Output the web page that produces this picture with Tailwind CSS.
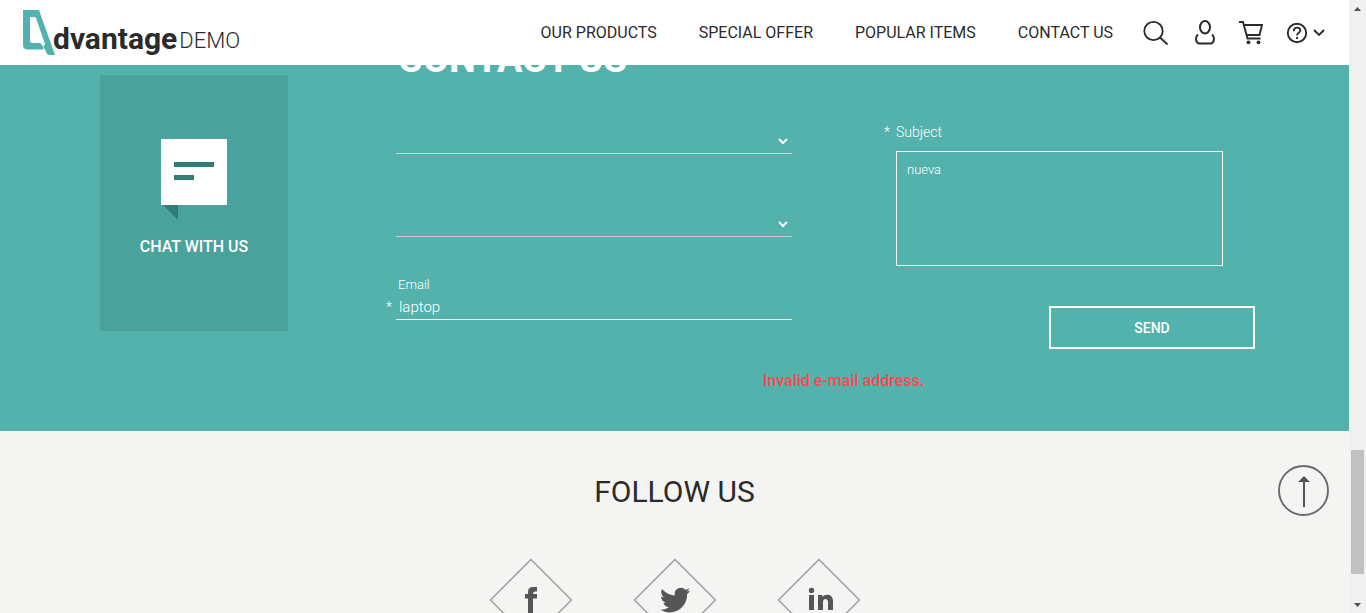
<!DOCTYPE html>
<html lang="en">
<head>
<meta charset="utf-8">
<meta name="viewport" content="width=device-width, initial-scale=1">
<title>Advantage Demo</title>
<script src="https://cdn.jsdelivr.net/npm/@tailwindcss/browser@4"></script>
</head>
<body class="flex h-screen overflow-hidden bg-[#f4f4f2] font-['Roboto',sans-serif] text-[#2b2b2b]">
<div class="flex min-w-0 flex-1 flex-col">
  <header class="relative z-10 flex h-[65px] shrink-0 items-center justify-between bg-white pr-[23px] pl-[23px]">
    <a href="#" class="flex items-end" aria-label="Advantage Demo">
      <svg class="h-[45px] w-8" viewBox="0 0 32 45" fill="#54b2ad"><path fill-rule="evenodd" d="M0 0H16L32 45H27Q24 45 23 42L20 35.500L20.500 39.500H5Q0 39.500 0 35ZM7 7V30.500Q7 33 10 33H16Q18 33 19 35L20 37L22 34L13 8Q12.500 7 11 7Z"/></svg>
      <span class="-ml-0.5 text-[30px] leading-8 font-bold">dvantage</span>
      <span class="ml-0.5 text-[22px] leading-7 font-light">DEMO</span>
    </a>
    <div class="flex items-center">
      <nav class="flex gap-[42px] pt-px text-base">
        <a href="#">OUR PRODUCTS</a>
        <a href="#">SPECIAL OFFER</a>
        <a href="#">POPULAR ITEMS</a>
        <a href="#">CONTACT US</a>
      </nav>
      <button class="ml-[30px]" aria-label="Search"><svg class="size-[26px]" viewBox="0 0 26 26" fill="none" stroke="#2b2b2b" stroke-width="1.800"><circle cx="10.500" cy="11" r="9.200"/><path d="M17 17.500L24.500 24.500"/></svg></button>
      <button class="ml-[26px]" aria-label="Account"><svg class="h-[26px] w-5" viewBox="0 0 20 26" fill="none" stroke="#2b2b2b" stroke-width="2"><ellipse cx="10" cy="7.200" rx="5" ry="6.200"/><path d="M3 14.500C0 17 .5 23.500 4.500 23.500H15.500C19.500 23.500 20 17 17 14.500"/></svg></button>
      <button class="ml-6" aria-label="Cart"><svg class="h-[26px] w-[25px]" viewBox="0 0 25 26" fill="none" stroke="#2b2b2b" stroke-width="1.900"><path d="M0 2H4L8.500 18.500H21.500M5 5H23L20.500 15H7.500"/><circle cx="9.500" cy="22.300" r="1.900" fill="#2b2b2b" stroke="none"/><circle cx="19.500" cy="22.300" r="1.900" fill="#2b2b2b" stroke="none"/></svg></button>
      <button class="ml-[22px]" aria-label="Help"><svg class="h-[26px] w-10" viewBox="0 0 40 26" fill="none" stroke="#2b2b2b" stroke-width="1.900"><circle cx="11" cy="13" r="9.200"/><path d="M7.800 11.200C7.500 6.500 14.500 6.500 14.300 10.500C14.200 12.800 11 12.800 11 15.500M11 17V19"/><path d="M28 10L33 15L38 10"/></svg></button>
    </div>
  </header>

  <section class="-mt-[22px] shrink-0 bg-[#54b2ad] pb-[38px] text-white">
    <h2 class="ml-[398px] text-[38px] leading-8 font-bold">CONTACT US</h2>
    <form class="flex items-start px-[94px] pl-[100px]">
      <button type="button" class="flex h-64 w-[188px] shrink-0 flex-col items-center pt-16 bg-[#4aa29c] font-medium">
        <svg class="h-[82px] w-[66px]" viewBox="0 0 66 82"><path fill="#fff" d="M0 0H66V66H0Z"/><path fill="#327c78" d="M13 23H53V28H13ZM13 36H33V41H13ZM2 66H17V81Z"/></svg>
        <span class="mt-3.5">CHAT WITH US</span>
      </button>
      <div class="ml-[98px] flex w-[406px] flex-col">
        <div class="ml-2.5 mt-[54px] flex h-[25px] items-center border-b border-[#d0d0d0]">
          <select aria-label="Category" class="h-6 w-full appearance-none outline-none"><option></option></select>
          <svg class="mr-1 h-2.5 w-2.5 shrink-0" viewBox="0 0 10 10" fill="none" stroke="#fff" stroke-width="2"><path d="M1 3L5 7L9 3"/></svg>
        </div>
        <div class="ml-2.5 mt-[58px] flex h-[25px] items-center border-b border-[#d0c8c8]">
          <select aria-label="Product" class="h-6 w-full appearance-none outline-none"><option></option></select>
          <svg class="mr-1 h-2.5 w-2.5 shrink-0" viewBox="0 0 10 10" fill="none" stroke="#fff" stroke-width="2"><path d="M1 3L5 7L9 3"/></svg>
        </div>
        <label for="email" class="ml-3 mt-[38px] text-[13px] leading-5 font-light">Email</label>
        <div class="flex h-[25px]">
          <span class="w-2.5 text-sm leading-6 font-light">*</span>
          <input id="email" type="text" value="laptop" class="min-w-0 flex-1 border-b border-white pl-[3px] text-[15px] font-light outline-none">
        </div>
      </div>
      <div class="ml-[92px] flex min-w-0 flex-1 flex-col pt-[47px]">
        <label for="subject" class="flex text-sm font-light"><span class="w-3">*</span>Subject</label>
        <textarea id="subject" class="ml-3 mt-[9px] mr-8 h-[115px] resize-none border border-white px-2.5 py-2 text-[13px] font-light outline-none">nueva</textarea>
        <button type="button" class="mt-10 h-[43px] w-[206px] self-end border-2 border-white text-sm font-medium">SEND</button>
      </div>
    </form>
    <p class="mt-5 pl-[338px] text-center text-base font-medium text-[#ff454f]">Invalid e-mail address.</p>
  </section>

  <section class="relative flex flex-1 flex-col items-center pt-[41px]">
    <h3 class="text-[30px] leading-10">FOLLOW US</h3>
    <div class="mt-[46px] flex gap-[60px]">
      <a href="#" aria-label="Facebook"><svg class="size-[84px]" viewBox="0 0 84 84"><path d="M42 1.500L82.500 42L42 82.500L1.500 42Z" fill="none" stroke="#999" stroke-width="1.300"/><path fill="#555" d="M39 55V40.500H36V36H39V34Q39 29 44 29H48V33.500H46Q44 33.500 44 36H48V40.500H44V55Z"/></svg></a>
      <a href="#" aria-label="Twitter"><svg class="size-[84px]" viewBox="0 0 84 84"><path d="M42 1.500L82.500 42L42 82.500L1.500 42Z" fill="none" stroke="#999" stroke-width="1.300"/><path transform="translate(27 27) scale(1.260)" fill="#555" d="M23.950 4.570a10 10 0 0 1-2.820.770 4.960 4.960 0 0 0 2.160-2.720c-.950.550-2 .950-3.130 1.180a4.920 4.920 0 0 0-8.380 4.480C7.690 8.090 4.070 6.130 1.640 3.160a4.820 4.820 0 0 0-.660 2.480c0 1.710.870 3.210 2.190 4.100a4.900 4.900 0 0 1-2.230-.620v.060a4.920 4.920 0 0 0 3.950 4.830 5 5 0 0 1-2.210.080 4.940 4.940 0 0 0 4.600 3.420A9.870 9.870 0 0 1 0 19.540a14 14 0 0 0 7.550 2.210c9.050 0 14-7.500 14-13.980 0-.210 0-.420-.020-.630a9.940 9.940 0 0 0 2.460-2.550z"/></svg></a>
      <a href="#" aria-label="LinkedIn"><svg class="size-[84px]" viewBox="0 0 84 84"><path d="M42 1.500L82.500 42L42 82.500L1.500 42Z" fill="none" stroke="#999" stroke-width="1.300"/><circle cx="34.500" cy="32.500" r="2.700" fill="#555"/><path fill="#555" d="M32 37H37V52H32ZM41 37H45.500V39C48 35.500 56 35.500 56 43V52H51V44C51 40 46 40 46 44V52H41Z"/></svg></a>
    </div>
    <button class="absolute top-[34px] right-5" aria-label="Back to top"><svg class="size-[51px]" viewBox="0 0 51 51"><circle cx="25.500" cy="25.500" r="24.500" fill="none" stroke="#6a6a6a" stroke-width="1.900"/><path fill="#555" d="M26 11L32 17H27V42H25V17H20Z"/></svg></button>
  </section>
</div>

<!-- Page scroll rail -->
<div class="flex w-[17px] shrink-0 flex-col items-center bg-[#f0f0f0]" aria-hidden="true">
  <svg class="h-[17px] w-[17px]" viewBox="0 0 17 17"><path fill="#505050" d="M8.500 7L12 11H5Z"/></svg>
  <div class="w-full grow-[433]"></div>
  <div class="w-[13px] grow-[124] bg-[#c1c1c1]"></div>
  <div class="w-full grow-[22]"></div>
  <svg class="h-[17px] w-[17px]" viewBox="0 0 17 17"><path fill="#505050" d="M8.500 11L12 7H5Z"/></svg>
</div>
</body>
</html>
